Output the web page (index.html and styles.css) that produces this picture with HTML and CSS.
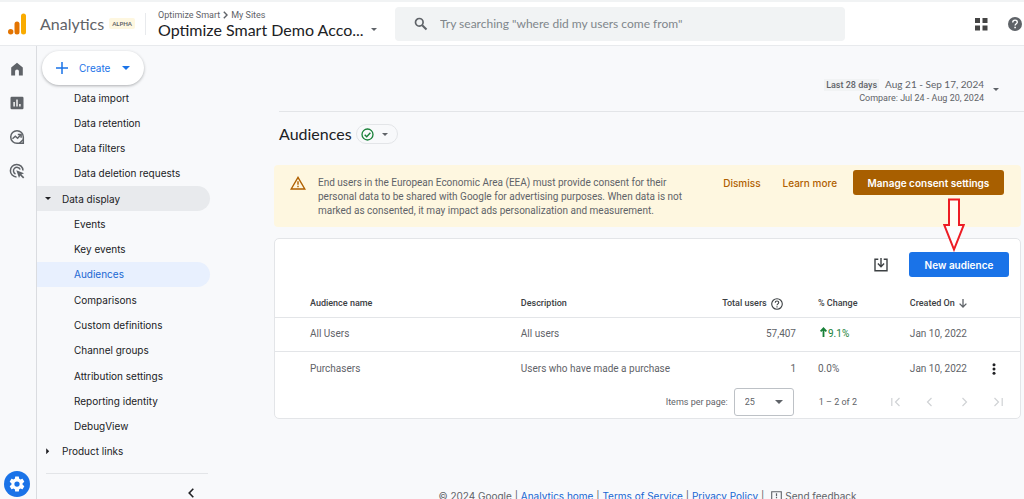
FILE: index.html
```html
<!DOCTYPE html>
<html lang="en">
<head>
<meta charset="utf-8">
<title>Analytics - Audiences</title>
<link rel="stylesheet" href="styles.css">
</head>
<body>
<header class="topbar">
  <div class="brand">
    <svg class="logo" viewBox="0 0 18 22" width="18" height="22" aria-hidden="true"><rect x="13" y="0.5" width="5" height="21" rx="2.5" fill="#f9ab00"/><rect x="6.500" y="8.500" width="5" height="13" rx="2.500" fill="#e37400"/><circle cx="2.700" cy="18.800" r="2.700" fill="#e37400"/></svg>
    <span class="brand-name">Analytics</span>
    <span class="alpha">ALPHA</span>
  </div>
  <div class="account">
    <div class="crumbs">Optimize Smart <svg width="5" height="8" viewBox="0 0 5 8" aria-hidden="true"><path d="M.8.8 4 4 .8 7.200" fill="none" stroke="#5f6368" stroke-width="1.400"/></svg> My Sites</div>
    <button class="account-name" type="button">Optimize Smart Demo Acco... <span class="caret"></span></button>
  </div>
  <form class="search">
    <svg width="14" height="14" viewBox="0 0 14 14" aria-hidden="true"><circle cx="5.300" cy="5.300" r="3.800" fill="none" stroke="#5f6368" stroke-width="1.700"/><path d="m8.200 8.200 4.300 4.300" stroke="#5f6368" stroke-width="2"/></svg>
    <input type="search" aria-label="Search" placeholder="Try searching &quot;where did my users come from&quot;">
  </form>
  <div class="tools">
    <button type="button" aria-label="Apps"><svg width="14" height="14" viewBox="0 0 14 14" fill="#444"><path d="M1 1h5v5H1zM8.500 1h5v5h-5zM1 8.500h5v5H1zM8.500 8.500h5v5h-5z"/></svg></button>
    <button type="button" aria-label="Help"><svg width="14" height="14" viewBox="0 0 14 14"><circle cx="7" cy="7" r="7" fill="#5f6368"/><path d="M4.700 5.500C4.800 2.200 9.400 2.400 9.300 5.300 9.200 6.800 7.100 6.900 7.100 8.600" fill="none" stroke="#fff" stroke-width="1.400"/><path d="M6.300 9.800h1.600v1.500H6.300z" fill="#fff"/></svg></button>
  </div>
</header>
<div class="body">
  <nav class="rail" aria-label="Primary">
    <a href="#" aria-label="Home"><svg width="14" height="14" viewBox="0 0 14 14"><path d="M1.200 5.400 7 .8l5.800 4.600v8H8.900V9.300a1.900 1.900 0 0 0-3.800 0v4.100H1.200z" fill="#5f6368"/></svg></a>
    <a href="#" aria-label="Reports"><svg width="14" height="14" viewBox="0 0 14 14"><rect x=".5" y=".8" width="13" height="12.500" rx="1.200" fill="#5f6368"/><path d="M4.100 6v4.500M7 3.500v7M9.900 8v2.500" stroke="#fff" stroke-width="1.400"/></svg></a>
    <a href="#" aria-label="Explore"><svg width="16" height="16" viewBox="0 0 16 16" fill="none" stroke="#5f6368" stroke-width="1.500"><path d="M14.300 14.300H8A6.300 6.300 0 1 1 14.300 8z"/><path d="m3.500 9.700 2.800-2.500 2.300 2 3-3.200"/><path d="M8.800 5.500h3.300v3.300M10.500 14.200l3.500-3.500" /></svg></a>
    <a href="#" aria-label="Advertising"><svg width="16" height="16" viewBox="0 0 16 16" fill="none" stroke="#5f6368" stroke-width="1.500"><path d="M7.500 14A6.300 6.300 0 1 1 14 7.500"/><path d="M6.500 11A3.500 3.500 0 1 1 11.200 6.500"/><path d="m7.300 7.300 7.700 2.900-2.600 1.200 2.900 2.900-1.200 1.200-2.900-2.900-1.200 2.500z" fill="#5f6368" stroke="none"/></svg></a>
    <a class="admin" href="#" aria-label="Admin"><svg width="18" height="18" viewBox="0 0 24 24" fill="#fff"><path d="M19.400 13c.1-.6.1-1.400 0-2l2.100-1.600c.2-.2.200-.4.100-.6l-2-3.500c-.1-.2-.4-.3-.6-.2l-2.400 1c-.5-.4-1.100-.7-1.700-1l-.4-2.600c0-.3-.2-.5-.5-.5h-4c-.3 0-.5.200-.5.500l-.4 2.600c-.6.300-1.200.6-1.700 1L5 5.100c-.2-.1-.5 0-.6.200l-2 3.500c-.1.200-.1.400.1.600L4.600 11c-.1.600-.1 1.400 0 2l-2.100 1.600c-.2.200-.2.400-.1.600l2 3.500c.1.200.4.300.6.200l2.400-1c.5.400 1.100.7 1.700 1l.4 2.600c0 .3.200.5.500.5h4c.3 0 .5-.2.500-.5l.4-2.600c.6-.3 1.200-.6 1.700-1l2.400 1c.2.100.5 0 .6-.2l2-3.500c.1-.2.100-.4-.1-.6zM12 15.500a3.500 3.500 0 1 1 0-7 3.500 3.500 0 0 1 0 7z" fill-rule="evenodd"/></svg></a>
  </nav>
  <aside class="sidebar">
    <div class="create-row"><button class="create" type="button"><svg width="12" height="12" viewBox="0 0 12 12" aria-hidden="true"><path d="M6 0v12M0 6h12" stroke="#1a73e8" stroke-width="1.500"/></svg><span>Create</span><span class="caret"></span></button></div>
    <nav class="menu" aria-label="Admin settings">
      <a href="#">Data import</a>
      <a href="#">Data retention</a>
      <a href="#">Data filters</a>
      <a href="#">Data deletion requests</a>
      <a class="group open" href="#"><i class="tri down"></i>Data display</a>
      <a href="#">Events</a>
      <a href="#">Key events</a>
      <a class="active" href="#" aria-current="page">Audiences</a>
      <a href="#">Comparisons</a>
      <a href="#">Custom definitions</a>
      <a href="#">Channel groups</a>
      <a href="#">Attribution settings</a>
      <a href="#">Reporting identity</a>
      <a href="#">DebugView</a>
      <a class="group" href="#"><i class="tri right"></i>Product links</a>
    </nav>
    <div class="collapse"><button type="button" aria-label="Collapse menu"><svg width="6" height="10" viewBox="0 0 6 10"><path d="M5.300.8 1.200 5l4.100 4.200" fill="none" stroke="#202124" stroke-width="1.600"/></svg></button></div>
  </aside>
  <main class="main">
    <div class="dates">
      <div class="date-text">
        <div class="range"><span class="preset">Last 28 days</span>Aug 21 - Sep 17, 2024</div>
        <div class="compare">Compare: Jul 24 - Aug 20, 2024</div>
      </div>
      <button type="button" aria-label="Change dates"><span class="caret"></span></button>
    </div>
    <div class="title">
      <h1>Audiences</h1>
      <button class="status" type="button" aria-label="Data quality"><svg width="13" height="13" viewBox="0 0 13 13"><circle cx="6.500" cy="6.500" r="5.500" fill="none" stroke="#188038" stroke-width="1.300"/><path d="m3.700 6.700 2 2 3.700-3.900" fill="none" stroke="#188038" stroke-width="1.400"/></svg><span class="caret"></span></button>
    </div>
    <section class="notice">
      <svg width="16" height="14" viewBox="0 0 16 14" aria-hidden="true"><path d="M8 1.400 14.800 13H1.200z" fill="none" stroke="#b06000" stroke-width="1.400"/><path d="M8 5.200v3.600M8 9.800v1.500" stroke="#b06000" stroke-width="1.400"/></svg>
      <p>End users in the European Economic Area (EEA) must provide consent for their personal data to be shared with Google for advertising purposes. When data is not marked as consented, it may impact ads personalization and measurement.</p>
      <div class="notice-actions">
        <button class="link" type="button">Dismiss</button>
        <a class="link last" href="#">Learn more</a>
        <button class="manage" type="button">Manage consent settings</button>
      </div>
    </section>
    <section class="card">
      <div class="card-tools">
        <button class="plain" type="button" aria-label="Download"><svg width="14" height="14" viewBox="0 0 14 14" fill="none" stroke="#3c4043" stroke-width="1.400"><path d="M4.300 1.200H1v11.600h12V1.200H9.700"/><path d="M7 0v8.500M3.900 5.600 7 8.700l3.100-3.100"/></svg></button>
        <div class="new-wrap">
          <button class="new" type="button">New audience</button>
          <svg class="pointer" width="22" height="54" viewBox="0 0 22 54" aria-hidden="true"><path d="M6 1.500h10V27h4.700L11 51.500 1.300 27H6z" fill="#fff" fill-opacity=".6" stroke="#ed1c24" stroke-width="2"/></svg>
        </div>
      </div>
      <table>
        <colgroup><col class="c-name"><col><col class="c-total"><col class="c-change"><col class="c-created"><col class="c-more"></colgroup>
        <thead><tr><th>Audience name</th><th>Description</th><th class="total">Total users <svg width="12" height="12" viewBox="0 0 12 12"><circle cx="6" cy="6" r="5.300" fill="none" stroke="#3c4043" stroke-width="1.100"/><path d="M4.200 4.800C4.300 2.300 7.800 2.500 7.700 4.700 7.600 5.800 6 5.900 6 7.300M6 8.300v1.200" fill="none" stroke="#3c4043" stroke-width="1.100"/></svg></th><th class="change">% Change</th><th class="created">Created On <svg width="8" height="9" viewBox="0 0 8 9"><path d="M4 0v8M.6 4.600 4 8l3.400-3.400" fill="none" stroke="#5f6368" stroke-width="1.300"/></svg></th><th></th></tr></thead>
        <tbody>
          <tr><td>All Users</td><td>All users</td><td class="num">57,407</td><td class="change up"><svg width="7" height="10" viewBox="0 0 7 10"><path d="M3.500 10V1.500M.6 4.300 3.500 1.300l2.900 3" fill="none" stroke="#188038" stroke-width="1.800"/></svg>9.1%</td><td class="created">Jan 10, 2022</td><td></td></tr>
          <tr><td>Purchasers</td><td>Users who have made a purchase</td><td class="num">1</td><td class="change">0.0%</td><td class="created">Jan 10, 2022</td><td class="more"><button class="plain" type="button" aria-label="More"><svg width="4" height="12" viewBox="0 0 4 12" fill="#202124"><circle cx="2" cy="1.700" r="1.500"/><circle cx="2" cy="6" r="1.500"/><circle cx="2" cy="10.300" r="1.500"/></svg></button></td></tr>
        </tbody>
      </table>
      <div class="pager">
        <label for="size">Items per page:</label>
        <span class="select"><select id="size"><option>25</option></select><span class="caret"></span></span>
        <span class="count">1 – 2 of 2</span>
        <div class="pages">
          <button type="button" disabled aria-label="First page"><svg width="10" height="10" viewBox="0 0 10 10"><path d="M.8 1v8M8.500 1 4.500 5l4 4"/></svg></button>
          <button type="button" disabled aria-label="Previous page"><svg width="10" height="10" viewBox="0 0 10 10"><path d="M6.500 1 2.500 5l4 4"/></svg></button>
          <button type="button" disabled aria-label="Next page"><svg width="10" height="10" viewBox="0 0 10 10"><path d="m3.500 1 4 4-4 4"/></svg></button>
          <button type="button" disabled aria-label="Last page"><svg width="10" height="10" viewBox="0 0 10 10"><path d="M9.200 1v8M1.500 1l4 4-4 4"/></svg></button>
        </div>
      </div>
    </section>
    <footer class="footer">
      <span>© 2024 Google | <a href="#">Analytics home</a> | <a href="#">Terms of Service</a> | <a href="#">Privacy Policy</a> |</span>
      <button class="feedback" type="button"><svg width="11" height="11" viewBox="0 0 11 11" aria-hidden="true"><path d="M.7 10.500V.7h9.600v8H2.500z" fill="none" stroke="#5f6368" stroke-width="1.100"/><path d="M5.500 2.300v2.900M5.500 6v1.300" stroke="#5f6368" stroke-width="1.200"/></svg>Send feedback</button>
    </footer>
  </main>
</div>
</body>
</html>
```
FILE: styles.css
```css
* { box-sizing: border-box; }
body {
  margin: 0;
  height: 100vh;
  overflow: hidden;
  display: flex;
  flex-direction: column;
  background: #f8f9fb;
  color: #3c4043;
  font: 10px/14px Roboto, sans-serif;
}
button { border: 0; background: none; padding: 0; font: inherit; color: inherit; cursor: pointer; }
a { color: inherit; text-decoration: none; }
svg { display: block; flex: none; }
.caret {
  width: 0;
  height: 0;
  flex: none;
  border: 3px solid transparent;
  border-top-color: currentColor;
  border-bottom: 0;
}
.topbar, .title, .dates { font-family: Lato, sans-serif; }
.sidebar, .notice-actions, .new, .footer { font-family: Inter, sans-serif; }

.topbar {
  height: 46px;
  flex: none;
  display: flex;
  align-items: center;
  background: #fff;
  border-top: 2px solid #f1f3f4;
  border-bottom: 1px solid #e8eaed;
}
.brand { display: flex; align-items: center; width: 146px; height: 22px; padding-left: 8px; border-right: 1px solid #e8eaed; }
.brand-name { margin-left: 14px; font-size: 16px; color: #5f6368; }
.alpha { margin-left: 5px; padding: 0 3px; border-radius: 2px; background: #fef7e0; font-size: 6px; line-height: 11px; font-weight: 700; color: #5f6368; }
.account { width: 249px; padding-left: 12px; flex: none; }
.crumbs { display: flex; align-items: center; gap: 3px; font: 9px/12px Roboto, sans-serif; color: #5f6368; }
.account-name { display: flex; align-items: center; gap: 7px; font-size: 16px; line-height: 18px; color: #202124; white-space: nowrap; }
.account-name .caret { color: #5f6368; }
.search { flex: 1; height: 34px; display: flex; align-items: center; gap: 12px; padding: 0 19px; background: #f1f3f4; border-radius: 4px; }
.search input { flex: 1; border: 0; background: none; outline: 0; padding: 0; font: 12px/16px Lato, sans-serif; color: #3c4043; }
.search input::placeholder { color: #80868b; opacity: 1; }
.tools { width: 179px; flex: none; display: flex; justify-content: flex-end; gap: 20px; padding-right: 2px; }

.body { flex: 1; min-height: 0; display: flex; }
.rail { width: 37px; flex: none; display: flex; flex-direction: column; align-items: center; padding: 6px 2px 2px 0; border-right: 1px solid #dadce0; }
.rail a { height: 34px; display: grid; place-items: center; }
.rail .admin { width: 26px; height: 26px; margin-top: auto; border-radius: 50%; background: #1a73e8; }
.sidebar { width: 173px; flex: none; display: flex; flex-direction: column; color: #202124; }
.create-row { height: 39px; flex: none; padding: 5px; }
.create {
  position: relative;
  z-index: 1;
  width: 102px;
  height: 34px;
  display: flex;
  align-items: center;
  padding-left: 14px;
  gap: 11px;
  border-radius: 17px;
  background: #fff;
  box-shadow: 0 1px 3px #3c404366;
  color: #1a73e8;
}
.create .caret { margin-left: 1px; border-width: 4px 4px 0; }
.menu { flex: 1; display: flex; flex-direction: column; }
.menu a { flex: 1; display: flex; align-items: center; padding-left: 37px; border-radius: 0 13px 13px 0; }
.menu .group { padding-left: 8px; }
.menu .open { background: #e8eaed; }
.menu .active { background: #e8f0fe; color: #1967d2; }
.tri { width: 6px; height: 6px; margin-right: 11px; background: #202124; }
.down { clip-path: polygon(0 20%, 100% 20%, 50% 70%); }
.right { clip-path: polygon(20% 0, 70% 50%, 20% 100%); }
.collapse { height: 26px; flex: none; margin: 9px 2px 0 9px; padding: 14px 14px 0 0; display: flex; justify-content: flex-end; border-top: 1px solid #e3e5e8; }
.collapse button { height: 10px; }

.main { flex: 1; min-width: 0; padding: 0 3px 0 64px; }
.dates { height: 66px; margin: 0 -3px 0 5px; padding: 31px 25px 0 0; display: flex; justify-content: flex-end; align-items: flex-start; gap: 9px; border-bottom: 1px solid #e3e5e8; color: #5f6368; text-align: right; }
.dates button { padding-top: 13px; }
.preset { margin-right: 6px; padding: 1px 2px; background: #f1f3f4; font: 500 9px/12px Roboto, sans-serif; }
.compare { font: 9px/14px Roboto, sans-serif; }
.title { display: flex; align-items: center; gap: 4px; padding: 12px 0 21px 5px; }
h1 { margin: 0; font-size: 16px; line-height: 20px; font-weight: 400; color: #202124; }
.status { width: 42px; height: 20px; display: flex; align-items: center; justify-content: space-between; padding: 0 9px 0 4px; border: 1px solid #e3e5e8; border-radius: 10px; color: #5f6368; }
.notice { display: flex; align-items: flex-start; padding: 5px 17px 9px 16px; background: #fef7e0; border-radius: 4px; }
.notice > svg { margin-top: 6px; }
.notice p { flex: 1; max-width: 381px; margin: 6px 0 0 12px; color: #5f6368; }
.notice-actions { margin-left: auto; display: flex; align-items: center; color: #b06000; font-weight: 500; white-space: nowrap; }
.link { margin-right: 22px; }
.link.last { margin-right: 16px; }
.manage, .new { height: 25px; border-radius: 3px; color: #fff; font-weight: 600; }
.manage { width: 151px; background: #a85f00; }
.card { margin-top: 11px; background: #fff; border: 1px solid #e3e5e8; border-radius: 5px; }
.card-tools { display: flex; justify-content: flex-end; align-items: center; gap: 21px; padding: 13px 11px; }
.new-wrap { position: relative; }
.new { width: 100px; background: #1a73e8; }
.pointer { position: absolute; right: 44px; bottom: 25px; }
table { width: 100%; table-layout: fixed; border-collapse: collapse; color: #5f6368; }
.c-name { width: 33%; }
.c-total { width: 120px; }
.c-change { width: 89px; }
.c-created { width: 82px; }
.c-more { width: 53px; }
th, td { padding: 0; text-align: left; white-space: nowrap; height: 34px; }
th { height: 27px; font-size: 9px; font-weight: 500; color: #3c4043; border-bottom: 1px solid #e3e5e8; }
th svg { display: inline-block; vertical-align: middle; margin-left: 2px; }
tbody tr:first-child td { border-bottom: 1px solid #e3e5e8; }
tbody tr:last-child td { height: 35px; }
th:first-child, td:first-child { padding-left: 35px; }
th.total { text-align: right; padding-right: 13px; }
td.num, th.created, td.created { text-align: right; }
th.change, td.change { padding-left: 22px; }
.up { color: #188038; }
.up svg { display: inline-block; margin: 0 1px 0 2px; }
td.more { text-align: center; }
.more svg { display: inline-block; vertical-align: middle; }
.pager { display: flex; align-items: center; justify-content: flex-end; padding: 2px 17px 2px 0; font-size: 9px; color: #5f6368; }
.select { position: relative; margin: 0 25px 0 6px; }
.select select { appearance: none; width: 60px; height: 28px; padding: 0 10px; border: 1px solid #bdc1c6; border-radius: 3px; background: #fff; font: inherit; color: inherit; }
.select .caret { position: absolute; right: 11px; top: 12px; border-width: 4px 4px 0; }
.pages { display: flex; gap: 24px; margin-left: 34px; }
.pages path { fill: none; stroke: #d0d2d5; stroke-width: 1.2; }
.footer { display: flex; justify-content: center; gap: 7px; margin-top: 70px; color: #5f6368; white-space: nowrap; }
.footer a { color: #1967d2; }
.feedback { display: flex; align-items: center; gap: 3px; }
```
